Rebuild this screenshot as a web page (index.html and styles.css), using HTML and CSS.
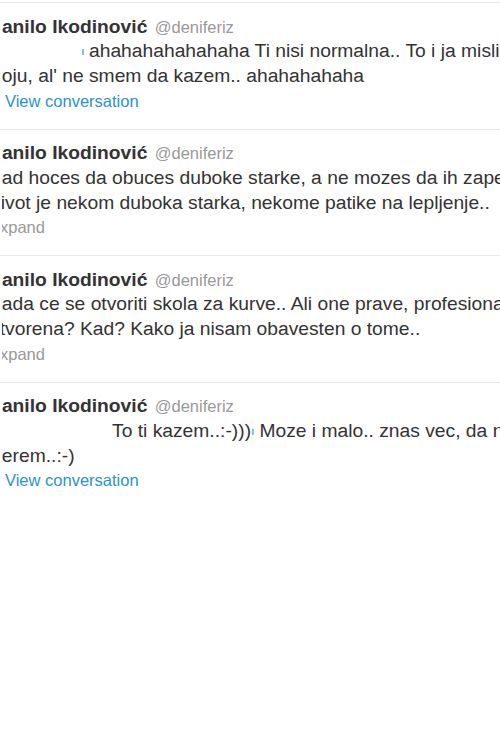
FILE: index.html
```html
<!DOCTYPE html>
<html lang="sr">
<head>
<meta charset="utf-8">
<title>Danilo Ikodinović (@deniferiz)</title>
<link rel="stylesheet" href="styles.css">
</head>
<body>
<div class="stream">
  <div class="tweet">
    <div class="clip">
      <div class="content">
        <div class="header"><strong class="fullname">Danilo Ikodinović</strong> <span class="username">@deniferiz</span></div>
        <p class="text">
          <span class="line"><span class="gap gap-short"></span><span class="tick"></span>ahahahahahahaha Ti nisi normalna.. To i ja mislim za tvoju curu</span>
          <span class="line">Koju, al' ne smem da kazem.. ahahahahaha</span>
        </p>
        <div class="footer"><a class="details convo" href="#"><span class="icon"></span>View conversation</a></div>
      </div>
    </div>
  </div>
  <div class="tweet">
    <div class="clip">
      <div class="content">
        <div class="header"><strong class="fullname">Danilo Ikodinović</strong> <span class="username">@deniferiz</span></div>
        <p class="text">
          <span class="line">Kad hoces da obuces duboke starke, a ne mozes da ih zapertlas..</span>
          <span class="line">Zivot je nekom duboka starka, nekome patike na lepljenje..</span>
        </p>
        <div class="footer"><a class="details" href="#">Expand</a></div>
      </div>
    </div>
  </div>
  <div class="tweet">
    <div class="clip">
      <div class="content">
        <div class="header"><strong class="fullname">Danilo Ikodinović</strong> <span class="username">@deniferiz</span></div>
        <p class="text">
          <span class="line">Kada ce se otvoriti skola za kurve.. Ali one prave, profesionalne..</span>
          <span class="line">otvorena? Kad? Kako ja nisam obavesten o tome..</span>
        </p>
        <div class="footer"><a class="details" href="#">Expand</a></div>
      </div>
    </div>
  </div>
  <div class="tweet last">
    <div class="clip">
      <div class="content">
        <div class="header"><strong class="fullname">Danilo Ikodinović</strong> <span class="username">@deniferiz</span></div>
        <p class="text">
          <span class="line"><span class="gap gap-long"></span>To ti kazem..:-)))<span class="tick tick-mid"></span> Moze i malo.. znas vec, da ne</span>
          <span class="line">Perem..:-)</span>
        </p>
        <div class="footer"><a class="details convo" href="#"><span class="icon"></span>View conversation</a></div>
      </div>
    </div>
  </div>
</div>
</body>
</html>
```

FILE: styles.css
```css
html, body {
  margin: 0;
  padding: 0;
  background: #ffffff;
  overflow: hidden;
}

.stream {
  width: 500px;
  padding-top: 2px;
  overflow: hidden;
}

.tweet {
  border-top: 1px solid #e8e8e8;
  padding: 11.5px 0 15px;
}

.tweet.last {
  padding-bottom: 0;
}

.clip {
  margin-left: 2px;
  overflow: hidden;
}

.content {
  margin-left: -13px;
  white-space: nowrap;
  font-family: "Liberation Sans", Arial, sans-serif;
  color: #333333;
}

.header {
  font-size: 19.25px;
  line-height: 24.75px;
  height: 24.75px;
  margin-left: -1px;
}

.fullname {
  font-weight: bold;
  color: #333333;
}

.username {
  font-size: 16.5px;
  color: #999999;
  margin-left: 2px;
}

.text {
  margin: 0;
  font-size: 19.25px;
  line-height: 24.75px;
}

.line {
  display: block;
}

.gap {
  display: inline-block;
  height: 1px;
}

.gap-short {
  width: 93px;
}

.gap-long {
  width: 123px;
}

.tick {
  display: inline-block;
  width: 2px;
  height: 6px;
  background: #7cc6ec;
  vertical-align: middle;
  margin-right: 5px;
}

.tick-mid {
  margin-left: 1px;
  margin-right: 0;
}

.footer {
  font-size: 16.5px;
  line-height: 24.75px;
  height: 24.75px;
}

.details {
  color: #999999;
  text-decoration: none;
}

.details.convo {
  color: #2a93cf;
}

.icon {
  display: inline-block;
  width: 16px;
  height: 1px;
}
```
